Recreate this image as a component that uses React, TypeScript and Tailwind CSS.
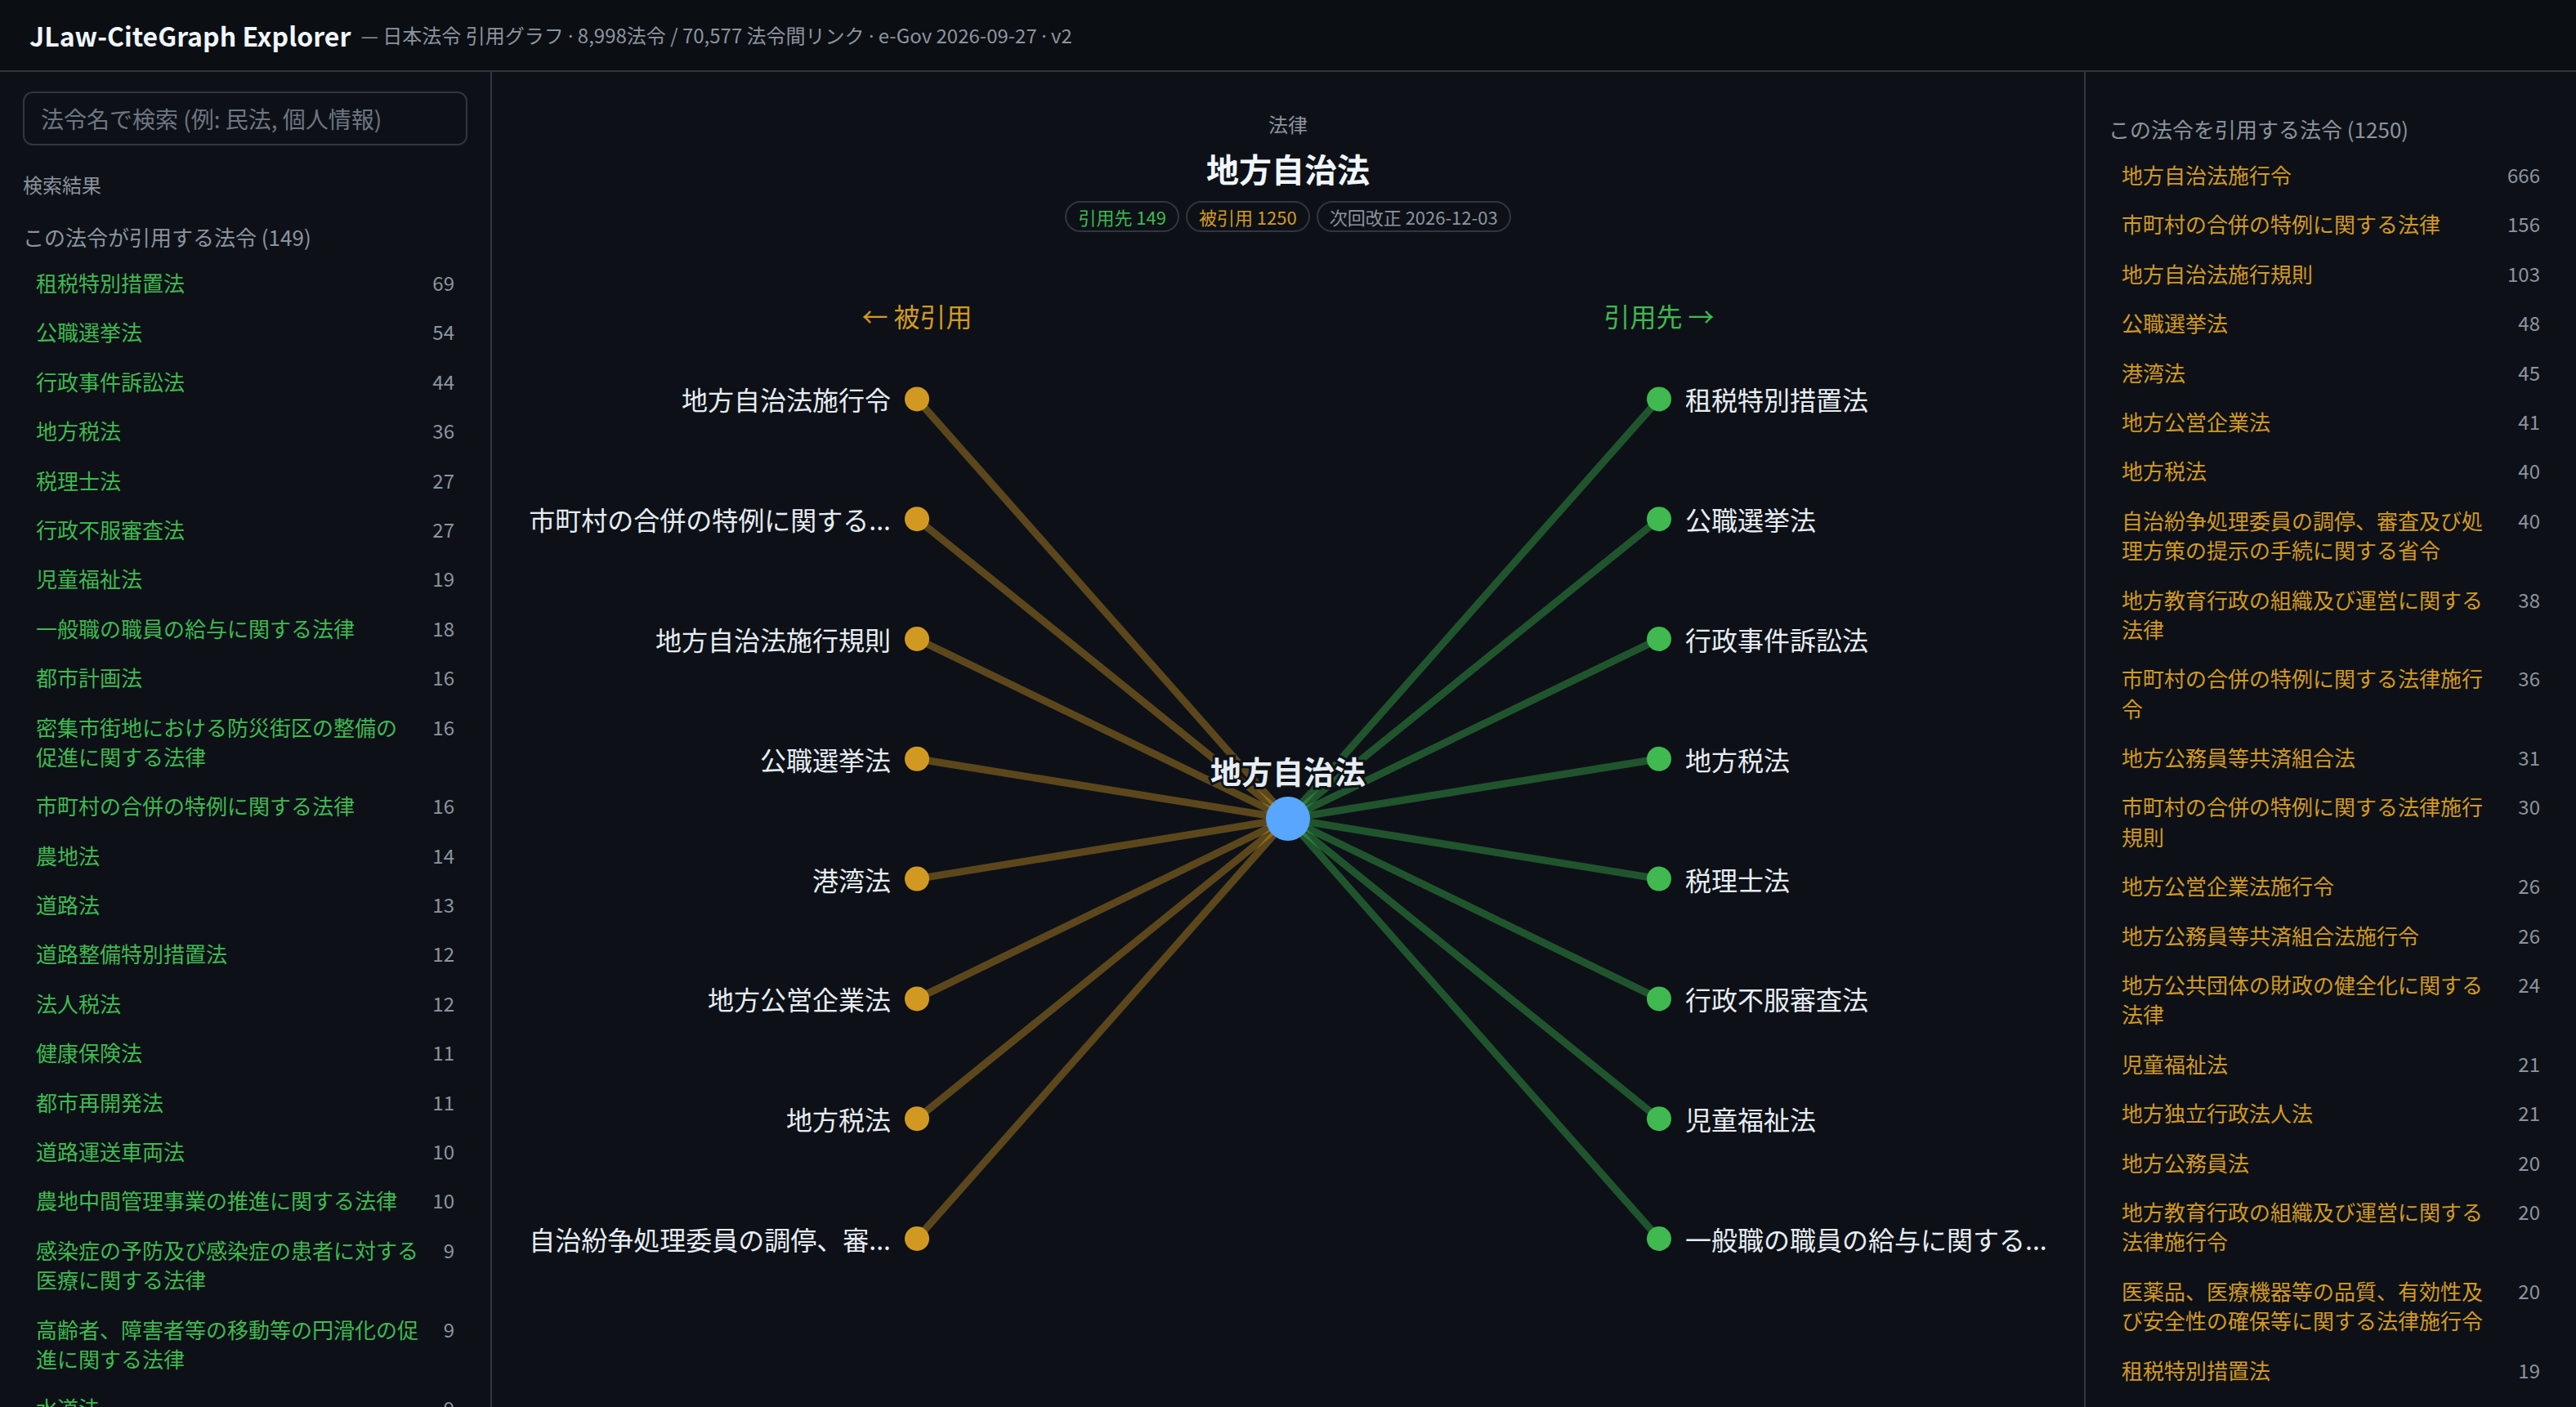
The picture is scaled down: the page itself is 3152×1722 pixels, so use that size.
import React from "react"

type Law = { name: string; count: number }

const outgoing: Law[] = [
  { name: "租税特別措置法", count: 69 },
  { name: "公職選挙法", count: 54 },
  { name: "行政事件訴訟法", count: 44 },
  { name: "地方税法", count: 36 },
  { name: "税理士法", count: 27 },
  { name: "行政不服審査法", count: 27 },
  { name: "児童福祉法", count: 19 },
  { name: "一般職の職員の給与に関する法律", count: 18 },
  { name: "都市計画法", count: 16 },
  { name: "密集市街地における防災街区の整備の促進に関する法律", count: 16 },
  { name: "市町村の合併の特例に関する法律", count: 16 },
  { name: "農地法", count: 14 },
  { name: "道路法", count: 13 },
  { name: "道路整備特別措置法", count: 12 },
  { name: "法人税法", count: 12 },
  { name: "健康保険法", count: 11 },
  { name: "都市再開発法", count: 11 },
  { name: "道路運送車両法", count: 10 },
  { name: "農地中間管理事業の推進に関する法律", count: 10 },
  { name: "感染症の予防及び感染症の患者に対する医療に関する法律", count: 9 },
  { name: "高齢者、障害者等の移動等の円滑化の促進に関する法律", count: 9 },
  { name: "水道法", count: 9 },
]

const incoming: Law[] = [
  { name: "地方自治法施行令", count: 666 },
  { name: "市町村の合併の特例に関する法律", count: 156 },
  { name: "地方自治法施行規則", count: 103 },
  { name: "公職選挙法", count: 48 },
  { name: "港湾法", count: 45 },
  { name: "地方公営企業法", count: 41 },
  { name: "地方税法", count: 40 },
  { name: "自治紛争処理委員の調停、審査及び処理方策の提示の手続に関する省令", count: 40 },
  { name: "地方教育行政の組織及び運営に関する法律", count: 38 },
  { name: "市町村の合併の特例に関する法律施行令", count: 36 },
  { name: "地方公務員等共済組合法", count: 31 },
  { name: "市町村の合併の特例に関する法律施行規則", count: 30 },
  { name: "地方公営企業法施行令", count: 26 },
  { name: "地方公務員等共済組合法施行令", count: 26 },
  { name: "地方公共団体の財政の健全化に関する法律", count: 24 },
  { name: "児童福祉法", count: 21 },
  { name: "地方独立行政法人法", count: 21 },
  { name: "地方公務員法", count: 20 },
  { name: "地方教育行政の組織及び運営に関する法律施行令", count: 20 },
  { name: "医薬品、医療機器等の品質、有効性及び安全性の確保等に関する法律施行令", count: 20 },
  { name: "租税特別措置法", count: 19 },
]

const graphLeft = [
  "地方自治法施行令",
  "市町村の合併の特例に関する...",
  "地方自治法施行規則",
  "公職選挙法",
  "港湾法",
  "地方公営企業法",
  "地方税法",
  "自治紛争処理委員の調停、審...",
]

const graphRight = [
  "租税特別措置法",
  "公職選挙法",
  "行政事件訴訟法",
  "地方税法",
  "税理士法",
  "行政不服審査法",
  "児童福祉法",
  "一般職の職員の給与に関する...",
]

function LawRow({ law, color }: { law: Law; color: string }) {
  return (
    <li className="flex items-start gap-3 px-2 py-1.5 text-[13px] leading-[1.4]">
      <span className={`flex-1 ${color}`}>{law.name}</span>
      <span className="shrink-0 text-xs leading-[18px] text-[#8b949e]">{law.count}</span>
    </li>
  )
}

// narrow latin middle dot (the CJK font draws it full width)
function Dot() {
  return <span className="font-['Noto_Sans',sans-serif]">·</span>
}

// graph coordinates are relative to the svg (panel x - 301, page y - 150)
const CX = 487
const CY = 351
const LX = 260
const RX = 714
const nodeY = (i: number) => 94.2 + i * 73.4

function CiteGraph() {
  return (
    <svg width={974} height={711} viewBox="0 0 974 711" className="block">
      <text x={LX} y={43} textAnchor="middle" dominantBaseline="central" fontSize={16} fill="#d29922">
        ← 被引用
      </text>
      <text x={RX} y={43} textAnchor="middle" dominantBaseline="central" fontSize={16} fill="#3fb950">
        引用先 →
      </text>

      {graphLeft.map((_, i) => (
        <line key={"el" + i} x1={CX} y1={CY} x2={LX} y2={nodeY(i)} stroke="#d29922" strokeOpacity={0.4} strokeWidth={4.5} />
      ))}
      {graphRight.map((_, i) => (
        <line key={"er" + i} x1={CX} y1={CY} x2={RX} y2={nodeY(i)} stroke="#3fb950" strokeOpacity={0.4} strokeWidth={4.5} />
      ))}

      <circle cx={CX} cy={CY} r={13.5} fill="#58a6ff" />
      <text
        x={CX}
        y={321}
        textAnchor="middle"
        dominantBaseline="central"
        fontSize={19}
        fontWeight={700}
        fill="#e6edf3"
        stroke="#0d1117"
        strokeWidth={3}
        paintOrder="stroke"
      >
        地方自治法
      </text>

      {graphLeft.map((name, i) => (
        <g key={"nl" + i}>
          <circle cx={LX} cy={nodeY(i)} r={7.5} fill="#d29922" />
          <text x={LX - 16} y={nodeY(i)} textAnchor="end" dominantBaseline="central" fontSize={16} fill="#e6edf3">
            {name}
          </text>
        </g>
      ))}
      {graphRight.map((name, i) => (
        <g key={"nr" + i}>
          <circle cx={RX} cy={nodeY(i)} r={7.5} fill="#3fb950" />
          <text x={RX + 16} y={nodeY(i)} dominantBaseline="central" fontSize={16} fill="#e6edf3">
            {name}
          </text>
        </g>
      ))}
    </svg>
  )
}

export default function App() {
  return (
    <div className="[zoom:2] w-[1576px] h-[861px] overflow-hidden bg-[#0d1117] text-[#e6edf3] font-['Noto_Sans_CJK_JP','Noto_Sans',sans-serif]">
      <header className="flex h-11 items-center border-b border-[#30363d] bg-[#0b0e13] px-[18px]">
        <span className="text-base font-bold text-[#f0f6fc]">JLaw-CiteGraph Explorer</span>
        <span className="ml-1.5 text-xs text-[#8b949e]">
          — 日本法令 引用グラフ <Dot /> 8,998法令 / 70,577 法令間リンク <Dot /> e-Gov 2026-09-27 <Dot /> v2
        </span>
      </header>

      <div className="flex h-[817px]">
        <aside className="w-[301px] shrink-0 overflow-hidden border-r border-[#30363d] px-3.5 pt-3">
          <input
            type="text"
            placeholder="法令名で検索 (例: 民法, 個人情報)"
            className="h-[33px] w-full rounded-md border border-[#30363d] bg-transparent px-2.5 text-sm text-[#e6edf3] outline-none placeholder:text-[#6e7681]"
          />
          <div className="mt-4 text-xs leading-4 text-[#8b949e]">検索結果</div>
          <div className="mt-[15px] text-[13px] leading-[18px] text-[#8b949e]">この法令が引用する法令 (149)</div>
          <ul className="mt-1">
            {outgoing.map((law) => (
              <LawRow key={law.name} law={law} color="text-[#3fb950]" />
            ))}
          </ul>
        </aside>

        <main className="flex flex-1 flex-col items-center overflow-hidden pt-6">
          <div className="text-xs leading-4 text-[#8b949e]">法律</div>
          <h1 className="mt-[5px] text-xl font-bold text-[#f0f6fc]">地方自治法</h1>
          <div className="mt-1.5 flex gap-1 text-[11px] leading-[17px]">
            <span className="rounded-full border border-[#30363d] px-[7px] text-[#3fb950]">引用先 149</span>
            <span className="rounded-full border border-[#30363d] px-[7px] text-[#d29922]">被引用 1250</span>
            <span className="rounded-full border border-[#30363d] px-[7px] text-[#8b949e]">次回改正 2026-12-03</span>
          </div>
          <div className="mt-2">
            <CiteGraph />
          </div>
        </main>

        <aside className="w-[301px] shrink-0 overflow-hidden border-l border-[#30363d] px-3.5 pt-[26px]">
          <div className="text-[13px] leading-[18px] text-[#8b949e]">この法令を引用する法令 (1250)</div>
          <ul className="mt-1">
            {incoming.map((law) => (
              <LawRow key={law.name} law={law} color="text-[#d29922]" />
            ))}
          </ul>
        </aside>
      </div>
    </div>
  )
}
